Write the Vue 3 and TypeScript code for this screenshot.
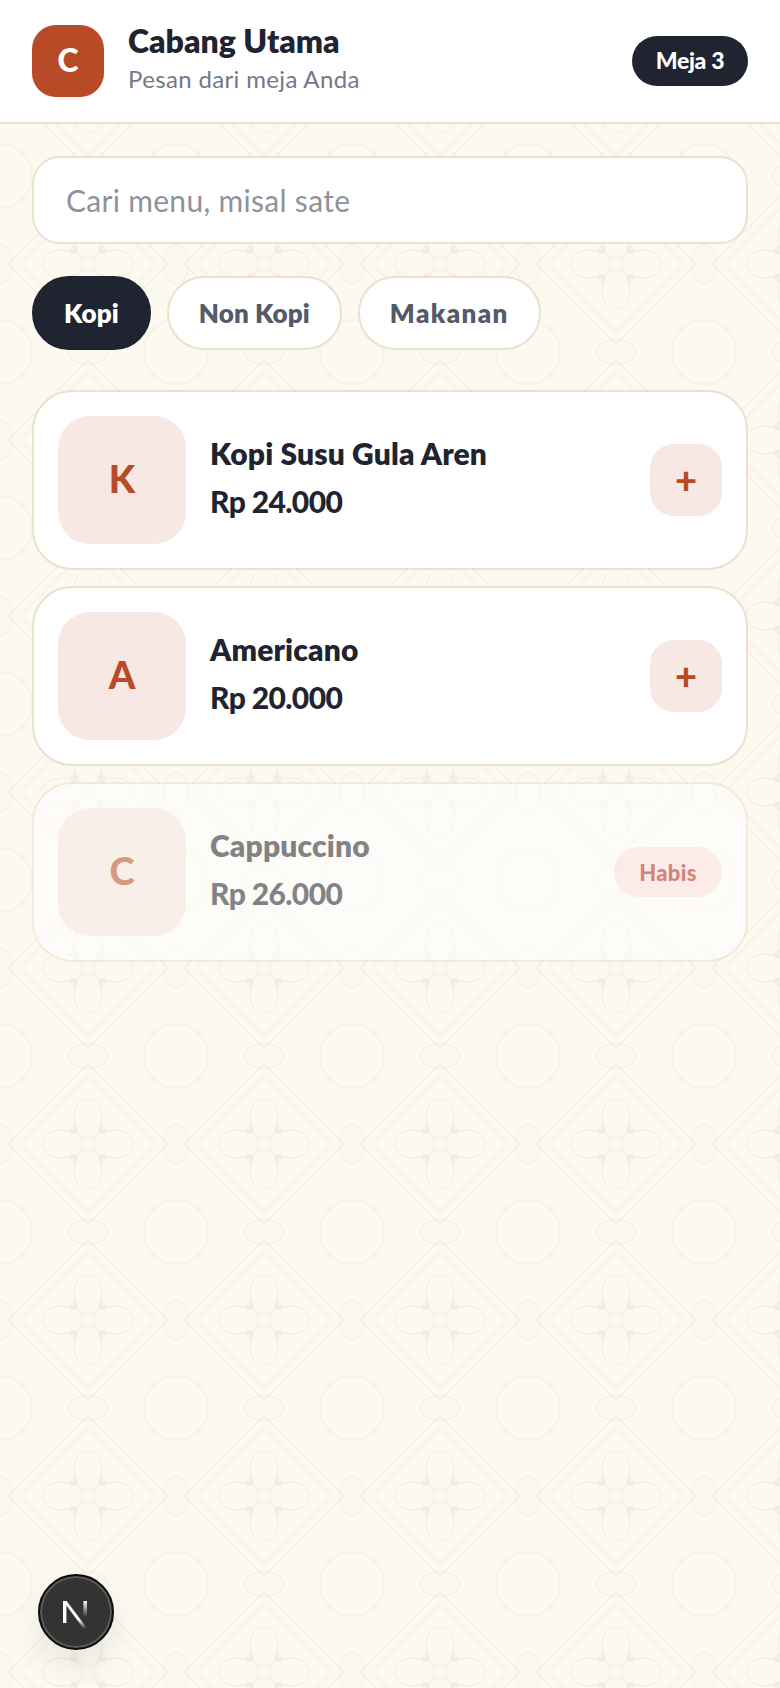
<template>
  <div class="page">
    <header class="top">
      <div class="brand">
        <div class="logo">C</div>
        <div class="brand-text">
          <div class="brand-name">Cabang Utama</div>
          <div class="brand-sub">Pesan dari meja Anda</div>
        </div>
      </div>
      <div class="table-pill">Meja 3</div>
    </header>

    <main class="content">
      <input class="search" type="text" placeholder="Cari menu, misal sate" />

      <div class="chips">
        <button v-for="(c, idx) in categories" :key="c" class="chip" :class="{ active: idx === 0 }">{{ c }}</button>
      </div>

      <div class="list">
        <div v-for="item in items" :key="item.name" class="card" :class="{ out: item.soldOut }">
          <div class="thumb">{{ item.name[0] }}</div>
          <div class="info">
            <div class="name">{{ item.name }}</div>
            <div class="price">{{ item.price }}</div>
          </div>
          <span v-if="item.soldOut" class="sold">Habis</span>
          <button v-else class="add">+</button>
        </div>
      </div>
    </main>

    <div class="dev-badge">
      <svg width="36" height="36" viewBox="0 0 36 36" fill="none">
        <defs>
          <linearGradient id="nDiag" x1="10" y1="10" x2="29" y2="34" gradientUnits="userSpaceOnUse">
            <stop offset="0.6" stop-color="#fff" />
            <stop offset="1" stop-color="#fff" stop-opacity="0" />
          </linearGradient>
          <linearGradient id="nBar" x1="27" y1="7" x2="27" y2="23" gradientUnits="userSpaceOnUse">
            <stop offset="0" stop-color="#fff" />
            <stop offset="1" stop-color="#fff" stop-opacity="0" />
          </linearGradient>
        </defs>
        <path d="M5 7h3.4v22H5z" fill="#fff" />
        <path d="M5 7h3.6l20.4 27h-3.8z" fill="url(#nDiag)" />
        <path d="M25.4 7H29v16h-3.6z" fill="url(#nBar)" />
      </svg>
    </div>
  </div>
</template>

<script setup lang="ts">
interface MenuItem {
  name: string
  price: string
  soldOut?: boolean
}

const categories = ['Kopi', 'Non Kopi', 'Makanan']

const items: MenuItem[] = [
  { name: 'Kopi Susu Gula Aren', price: 'Rp 24.000' },
  { name: 'Americano', price: 'Rp 20.000' },
  { name: 'Cappuccino', price: 'Rp 26.000', soldOut: true },
]
</script>

<style scoped>
.page {
  min-height: 1688px;
  box-sizing: border-box;
  background-color: #fbf9f0;
  background-image: url("data:image/svg+xml,%3Csvg xmlns='http://www.w3.org/2000/svg' width='176' height='176' viewBox='0 0 176 176' fill='none' stroke='%23b98c5e' stroke-opacity='.08' stroke-width='1.6'%3E%3Cpath d='M88 8l80 80-80 80-80-80z'/%3E%3Cpath d='M88 20l68 68-68 68-68-68z'/%3E%3Cellipse cx='88' cy='62' rx='14' ry='20'/%3E%3Cellipse cx='88' cy='114' rx='14' ry='20'/%3E%3Cellipse cx='62' cy='88' rx='20' ry='14'/%3E%3Cellipse cx='114' cy='88' rx='20' ry='14'/%3E%3Cellipse cx='88' cy='0' rx='20' ry='12'/%3E%3Cellipse cx='88' cy='176' rx='20' ry='12'/%3E%3Cellipse cx='0' cy='88' rx='12' ry='20'/%3E%3Cellipse cx='176' cy='88' rx='12' ry='20'/%3E%3Ccircle cx='0' cy='0' r='32'/%3E%3Ccircle cx='176' cy='0' r='32'/%3E%3Ccircle cx='0' cy='176' r='32'/%3E%3Ccircle cx='176' cy='176' r='32'/%3E%3Cg fill='%23b98c5e' fill-opacity='.08' stroke='none'%3E%3Ccircle cx='74' cy='74' r='4'/%3E%3Ccircle cx='102' cy='74' r='4'/%3E%3Ccircle cx='74' cy='102' r='4'/%3E%3Ccircle cx='102' cy='102' r='4'/%3E%3C/g%3E%3C/svg%3E");
  font-family: "Lato", "Liberation Sans", sans-serif;
  color: #1f2430;
}

.top {
  display: flex;
  align-items: center;
  justify-content: space-between;
  padding: 24px 32px;
  height: 124px;
  box-sizing: border-box;
  background: #fff;
  border-bottom: 2px solid #ebe1cd;
}
.brand { display: flex; align-items: center; gap: 24px; }
.logo {
  width: 72px;
  height: 72px;
  box-sizing: border-box;
  padding-bottom: 4px;
  border-radius: 24px;
  background: #b94a28;
  color: #fff;
  display: flex;
  align-items: center;
  justify-content: center;
  font-size: 32px;
  font-weight: 900;
}
.brand-text { padding-bottom: 4px; }
.brand-name { font-size: 32px; font-weight: 800; line-height: 36px; }
.brand-sub { font-size: 24px; line-height: 32px; margin-top: 4px; color: #737889; letter-spacing: 0.35px; }
.table-pill {
  height: 50px;
  width: 116px;
  box-sizing: border-box;
  padding-bottom: 3px;
  border-radius: 25px;
  background: #1f2430;
  color: #fff;
  font-size: 23px;
  font-weight: 900;
  letter-spacing: -0.3px;
  display: flex;
  align-items: center;
  justify-content: center;
}

.content { padding: 32px; }
.search {
  display: block;
  width: 100%;
  height: 88px;
  box-sizing: border-box;
  padding: 0 32px;
  background: #fff;
  border: 2px solid #ebe1cd;
  border-radius: 28px;
  outline: none;
  font-family: inherit;
  font-size: 30px;
  letter-spacing: 0.3px;
  color: #1f2430;
}
.search::placeholder { color: #8e929c; opacity: 1; }

.chips { display: flex; gap: 16px; margin-top: 32px; }
.chip {
  height: 74px;
  padding: 0 30px;
  background: #fff;
  border: 2px solid #ebe1cd;
  border-radius: 37px;
  font-family: inherit;
  font-size: 26px;
  font-weight: 800;
  letter-spacing: 0.1px;
  color: #555a6b;
}
.chip:nth-child(3) { letter-spacing: 1.4px; }
.chip.active { background: #1f2430; border-color: #1f2430; color: #fff; }

.list { display: flex; flex-direction: column; gap: 16px; margin-top: 40px; }
.card {
  display: flex;
  align-items: center;
  height: 180px;
  box-sizing: border-box;
  padding: 0 24px;
  background: #fff;
  border: 2px solid #ebe1cd;
  border-radius: 40px;
}
.card.out { opacity: 0.55; }
.thumb {
  width: 128px;
  height: 128px;
  flex: none;
  box-sizing: border-box;
  padding-bottom: 4px;
  border-radius: 32px;
  background: #f8e8e4;
  color: #b94a28;
  display: flex;
  align-items: center;
  justify-content: center;
  font-size: 38px;
  font-weight: 900;
}
.info { flex: 1; margin-left: 24px; padding-bottom: 7px; }
.name { font-size: 30px; font-weight: 800; line-height: 40px; letter-spacing: 0.15px; }
.price { font-size: 30px; font-weight: 900; line-height: 40px; margin-top: 8px; letter-spacing: -0.6px; }
.add {
  width: 72px;
  height: 72px;
  border: none;
  border-radius: 24px;
  background: #f8e8e4;
  color: #b94a28;
  font-family: inherit;
  font-size: 38px;
  font-weight: 900;
  padding: 0 0 3px;
}
.sold {
  width: 108px;
  height: 50px;
  border-radius: 25px;
  background: #fee2e2;
  color: #b42318;
  font-size: 22px;
  font-weight: 900;
  letter-spacing: 0.3px;
  display: flex;
  align-items: center;
  justify-content: center;
}

.dev-badge {
  position: fixed;
  left: 38px;
  top: 1574px;
  width: 76px;
  height: 76px;
  box-sizing: border-box;
  border-radius: 50%;
  background: #333;
  border: 2px solid #0c0c0c;
  box-shadow: inset 0 0 0 2px #5a5a5a, 0 16px 32px rgba(0, 0, 0, 0.08);
  display: flex;
  align-items: center;
  justify-content: center;
}
</style>

<style>
html, body { margin: 0; background: #fbf9f0; }
</style>
